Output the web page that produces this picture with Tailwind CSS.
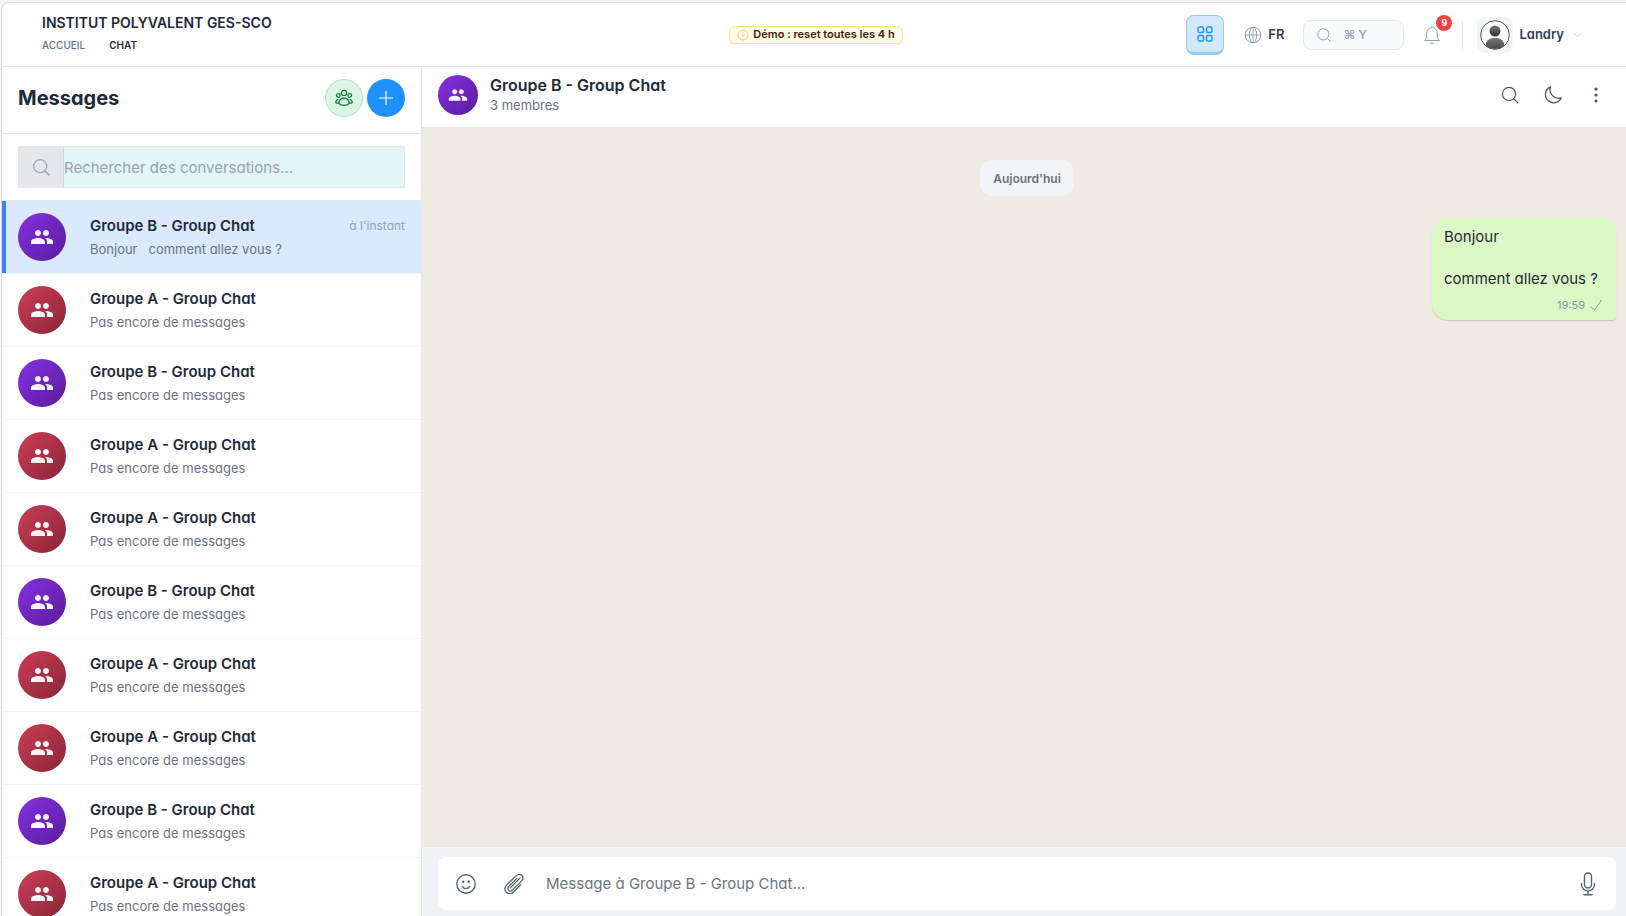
<!DOCTYPE html>
<html lang="fr">
<head>
    <meta charset="UTF-8">
    <meta name="viewport" content="width=device-width, initial-scale=1.0">
    <title>Chat</title>
    <script src="https://cdn.jsdelivr.net/npm/@tailwindcss/browser@4"></script>
</head>
<body class="h-screen overflow-hidden bg-[#f5f6f8] pt-[2px] pl-px font-['Inter',sans-serif] [font-feature-settings:'cv11'] text-gray-800">
    <div class="flex h-full flex-col overflow-hidden rounded-tl-lg border-t border-l border-[#d9dce1] bg-white">

        <!-- Top bar -->
        <header class="grid h-16 shrink-0 grid-cols-[1fr_auto_1fr] items-center border-b border-slate-200 pr-9 pl-10">
            <div class="pb-[3px]">
                <div class="text-sm leading-5 font-semibold text-slate-800">INSTITUT POLYVALENT GES-SCO</div>
                <nav class="mt-1 flex gap-6 text-[10px] leading-4 font-medium">
                    <a href="#" class="text-slate-500">ACCUEIL</a>
                    <a href="#" class="font-semibold text-slate-800">CHAT</a>
                </nav>
            </div>

            <div class="flex h-[18px] items-center gap-1 rounded-md border border-[#fde68a] bg-[#fffbeb] px-[7px] text-[11px] font-semibold text-[#451a03] shadow-xs">
                <svg class="size-3 text-[#f3c08a]" viewBox="0 0 24 24" fill="none" stroke="currentColor" stroke-width="2"><circle cx="12" cy="12" r="10"/><path d="M12 11v6M12 7v1.5"/></svg>
                Démo : reset toutes les 4 h
            </div>

            <div class="flex items-center justify-end pr-2">
                <button aria-label="Applications" class="flex h-10 w-[38px] items-center justify-center rounded-lg border border-b-3 border-[#93caff] bg-[#d2e8ff] text-[#1e90ff]">
                    <svg class="size-4" viewBox="0 0 16 16" fill="none" stroke="currentColor" stroke-width="1.4"><rect x="1" y="1" width="5.5" height="5.5" rx="1.5"/><rect x="9.5" y="1" width="5.5" height="5.5" rx="1.5"/><rect x="1" y="9.5" width="5.5" height="5.5" rx="1.5"/><rect x="9.5" y="9.5" width="5.5" height="5.5" rx="1.5"/></svg>
                </button>
                <button class="ml-5 flex items-center gap-[6px] text-[13px] font-semibold text-slate-700">
                    <svg class="size-[18px] text-slate-400" viewBox="0 0 18 18" fill="none" stroke="currentColor"><circle cx="9" cy="9" r="7.8"/><ellipse cx="9" cy="9" rx="3.6" ry="7.8"/><path d="M9 1v16M1.2 9h15.6"/></svg>
                    FR
                </button>
                <button class="ml-[19px] flex h-[30px] w-[101px] items-center gap-3 rounded-lg border border-slate-200 bg-slate-50 pl-[13px] text-xs font-medium text-slate-400">
                    <svg class="size-[14px]" viewBox="0 0 14 14" fill="none" stroke="currentColor"><circle cx="6.3" cy="6.3" r="5.6"/><path d="M10.4 10.4l3 3"/></svg>
                    <span>⌘ Y</span>
                </button>
                <button aria-label="Notifications" class="relative ml-[19px] text-slate-400">
                    <svg class="size-[18px]" viewBox="0 0 18 18" fill="none" stroke="currentColor" stroke-linejoin="round"><path d="M9 .5v1M3.7 12V7a5.3 5.3 0 0 1 10.6 0v5l2.2 2.5h-15zM7 16.5c1 1.2 3 1.2 4 0"/></svg>
                    <span class="absolute -top-[11px] -right-[11px] flex size-4 items-center justify-center rounded-full bg-[#ef4444] text-[9px] font-bold text-white">9</span>
                </button>
                <span class="ml-[21px] h-7 w-px bg-slate-200"></span>
                <button class="ml-[14px] flex items-center text-[13px] font-semibold text-slate-700">
                    <span class="flex size-9 items-center justify-center rounded-lg bg-slate-100">
                        <svg class="size-[30px]" viewBox="0 0 30 30">
                            <defs>
                                <linearGradient id="user" x1="0" y1="0" x2="0" y2="1"><stop offset="0" stop-color="#777"/><stop offset="1" stop-color="#333"/></linearGradient>
                                <clipPath id="face"><circle cx="15" cy="15" r="14"/></clipPath>
                            </defs>
                            <circle cx="15" cy="15" r="14.3" fill="#fff" stroke="#555"/>
                            <g clip-path="url(#face)"><circle cx="15" cy="11" r="5.5" fill="url(#user)"/><rect x="5.5" y="18" width="19" height="16" rx="8" fill="url(#user)"/></g>
                        </svg>
                    </span>
                    <span class="ml-[6px]">Landry</span>
                    <svg class="ml-[9px] h-[6px] w-[9px] text-slate-300" viewBox="0 0 9 6" fill="none" stroke="currentColor"><path d="M.5.8l4 4 4-4"/></svg>
                </button>
            </div>
        </header>

        <div class="flex min-h-0 flex-1">
            <!-- Conversations -->
            <aside class="flex w-[420px] shrink-0 flex-col border-r border-gray-200">
                <div class="flex h-[67px] shrink-0 items-center justify-between border-b border-gray-200 px-4 pb-[5px]">
                    <h1 class="text-xl font-bold">Messages</h1>
                    <div class="flex gap-1">
                        <button aria-label="Nouveau groupe" class="flex size-[38px] items-center justify-center rounded-full border border-[#a9e6bd] bg-[#dcf5e5] text-[#15803d]">
                            <svg class="size-[18px]" viewBox="0 0 18 18" fill="none" stroke="currentColor" stroke-width="1.3" stroke-linejoin="round"><circle cx="9" cy="4" r="2.6"/><circle cx="3.3" cy="6.5" r="1.8"/><circle cx="14.7" cy="6.5" r="1.8"/><path d="M3.8 14.5C3.8 7.5 14.2 7.5 14.2 14.5 11.5 17 6.5 17 3.8 14.5zM3.5 10.3C1.5 10.5.8 12 .8 13.7l2.5.6M14.5 10.3c2 .2 2.7 1.7 2.7 3.4l-2.5.6"/></svg>
                        </button>
                        <button aria-label="Nouvelle conversation" class="flex size-[38px] items-center justify-center rounded-full bg-[#1e90ff] text-white">
                            <svg class="size-[14px]" viewBox="0 0 14 14" fill="none" stroke="currentColor" stroke-width="1.2"><path d="M7 0v14M0 7h14"/></svg>
                        </button>
                    </div>
                </div>
                <div class="shrink-0 border-b border-gray-200 px-4 py-3">
                    <div class="flex h-[42px] border border-gray-200">
                        <label for="search" class="flex w-[45px] items-center justify-center border-r border-gray-300 bg-gray-200 text-gray-400">
                            <svg class="size-[17px]" viewBox="0 0 17 17" fill="none" stroke="currentColor" stroke-width="1.2"><circle cx="7.2" cy="7.2" r="6.5"/><path d="M12 12l4.5 4.5"/></svg>
                        </label>
                        <input id="search" type="text" placeholder="Rechercher des conversations..." class="min-w-0 flex-1 bg-[#e2f6f5] pt-[2px] text-[15px] outline-none placeholder:text-gray-400">
                    </div>
                </div>
                <ul id="conversations" class="min-h-0 flex-1 overflow-hidden">
                    <!-- Conversations will be inserted here -->
                </ul>
            </aside>

            <!-- Chat -->
            <main class="flex min-w-0 flex-1 flex-col">
                <div class="flex h-[61px] shrink-0 items-center border-b border-gray-200 pr-[21px] pb-[5px] pl-4">
                    <div class="flex size-10 items-center justify-center rounded-full bg-linear-135 from-[#8632e0] to-[#5b1a9e] text-white/95">
                        <svg class="size-5" viewBox="0 0 24 24" fill="currentColor"><path d="M16 11c1.66 0 2.99-1.34 2.99-3S17.66 5 16 5s-3 1.34-3 3 1.34 3 3 3zm-8 0c1.66 0 2.99-1.34 2.99-3S9.66 5 8 5 5 6.34 5 8s1.34 3 3 3zm0 2c-2.33 0-7 1.17-7 3.5V19h14v-2.5c0-2.33-4.67-3.5-7-3.5zm8 0c-.29 0-.62.02-.97.05 1.16.84 1.97 1.97 1.97 3.45V19h6v-2.5c0-2.33-4.67-3.5-7-3.5z"/></svg>
                    </div>
                    <div class="ml-3 flex-1">
                        <h2 class="text-base leading-5 font-semibold">Groupe B - Group Chat</h2>
                        <p class="text-[13px] leading-5 text-gray-500">3 membres</p>
                    </div>
                    <div class="flex items-center gap-[25px] text-gray-600">
                        <button aria-label="Rechercher"><svg class="size-[18px]" viewBox="0 0 18 18" fill="none" stroke="currentColor" stroke-width="1.2"><circle cx="8" cy="8" r="6.6"/><path d="M12.8 12.8l4.2 4.2"/></svg></button>
                        <button aria-label="Mode sombre"><svg class="size-[18px]" viewBox="0 0 18 18" fill="none" stroke="currentColor" stroke-width="1.3" stroke-linejoin="round"><path d="M6.5.8A8.3 8.3 0 1 0 17.3 11.8 8.6 8.6 0 0 1 6.5.8z"/></svg></button>
                        <button aria-label="Menu"><svg class="size-[18px]" viewBox="0 0 18 18" fill="currentColor"><circle cx="9" cy="3" r="1.6"/><circle cx="9" cy="9" r="1.6"/><circle cx="9" cy="15" r="1.6"/></svg></button>
                    </div>
                </div>

                <div class="flex min-h-0 flex-1 flex-col bg-[#efeae2] pt-8 pr-[10px] pl-4">
                    <div class="flex h-9 items-center self-center rounded-xl bg-[#f3f4f6] px-[13px] pt-px text-xs font-semibold text-gray-500">Aujourd'hui</div>
                    <div class="mt-[22px] min-w-[184px] self-end rounded-2xl rounded-br-sm bg-[#dcf8c6] px-3 pt-2 pb-[6px] shadow-[0_1px_1px_rgba(0,0,0,0.15)]">
                        <p class="text-[15px] leading-[21px]">Bonjour<br><br>comment allez vous ?</p>
                        <div class="mt-[7px] flex items-center justify-end gap-[5px] pr-[2px] text-[11px] leading-[18px] text-[#7f9aa0]">
                            19:59
                            <svg class="size-3" viewBox="0 0 12 12" fill="none" stroke="currentColor"><path d="M.5 7.5l4 3.5 7-10"/></svg>
                        </div>
                    </div>
                </div>

                <div class="shrink-0 border-t border-gray-200 bg-[#f0f2f5] pt-[10px] pr-[10px] pb-[6px] pl-4">
                    <div class="flex h-[53px] items-center rounded-lg bg-white pr-4 pl-[18px] text-[#54656f]">
                        <button aria-label="Emoji"><svg class="size-5" viewBox="0 0 20 20" fill="none" stroke="currentColor" stroke-width="1.4" stroke-linecap="round"><circle cx="10" cy="10" r="9.2"/><path d="M6.5 12.7c1.7 2.5 5.3 2.5 7 0"/><g fill="currentColor" stroke="none"><circle cx="7.2" cy="7.8" r="1.2"/><circle cx="12.8" cy="7.8" r="1.2"/></g></svg></button>
                        <button aria-label="Joindre un fichier" class="ml-7"><svg class="size-5" viewBox="0 0 20 20" fill="none" stroke="currentColor" stroke-width="1.3" stroke-linecap="round" stroke-linejoin="round"><path d="M16.6 10.8l-7.4 7.4A4.8 4.8 0 0 1 2.1 11.6L12.4 1.6a3.7 3.7 0 0 1 5.6 5L8.6 15.9a2.6 2.6 0 0 1-4-3.4L12.9 4.4"/><path d="M15.7 4.3L6.6 13.6"/></svg></button>
                        <input type="text" aria-label="Message" placeholder="Message à Groupe B - Group Chat..." class="ml-[22px] min-w-0 flex-1 pt-[2px] text-[15px] outline-none placeholder:text-[#667781]">
                        <button aria-label="Message vocal"><svg class="size-6" viewBox="0 0 24 24" fill="none" stroke="currentColor" stroke-width="1.4" stroke-linecap="round"><rect x="8.5" y="1" width="7" height="15" rx="3.5"/><path d="M5.5 11.5v1a6.5 6.5 0 0 0 13 0v-1M12 19v3.5M8 22.8h8"/></svg></button>
                    </div>
                </div>
            </main>
        </div>
    </div>

    <script>
        const groups = ['B', 'A', 'B', 'A', 'A', 'B', 'A', 'A', 'B', 'A'];

        const createConversation = (group, index) => {
            const active = index === 0;
            const color = group === 'B' ? 'from-[#8632e0] to-[#5b1a9e]' : 'from-[#cc3d57] to-[#8b2638]';
            return `
                <li class="relative flex h-[73px] items-center border-b border-gray-100 px-4 ${active ? 'bg-[#dbe9fe]' : ''}">
                    ${active ? '<span class="absolute inset-y-0 left-0 w-1 bg-[#3b82f6]"></span>' : ''}
                    <div class="flex size-12 shrink-0 items-center justify-center rounded-full bg-linear-135 text-white/95 ${color}">
                        <svg class="size-6" viewBox="0 0 24 24" fill="currentColor"><path d="M16 11c1.66 0 2.99-1.34 2.99-3S17.66 5 16 5s-3 1.34-3 3 1.34 3 3 3zm-8 0c1.66 0 2.99-1.34 2.99-3S9.66 5 8 5 5 6.34 5 8s1.34 3 3 3zm0 2c-2.33 0-7 1.17-7 3.5V19h14v-2.5c0-2.33-4.67-3.5-7-3.5zm8 0c-.29 0-.62.02-.97.05 1.16.84 1.97 1.97 1.97 3.45V19h6v-2.5c0-2.33-4.67-3.5-7-3.5z"/></svg>
                    </div>
                    <div class="ml-6 min-w-0 flex-1 pt-px">
                        <div class="flex items-center justify-between">
                            <h3 class="text-[15px] leading-6 font-semibold">Groupe ${group} - Group Chat</h3>
                            ${active ? '<span class="text-xs text-gray-400">à l\'instant</span>' : ''}
                        </div>
                        <p class="text-[13px] leading-[23px] whitespace-pre text-gray-500">${active ? 'Bonjour   comment allez vous ?' : 'Pas encore de messages'}</p>
                    </div>
                </li>
            `;
        }

        document.getElementById('conversations').innerHTML = groups.map(createConversation).join('');
    </script>
</body>
</html>
